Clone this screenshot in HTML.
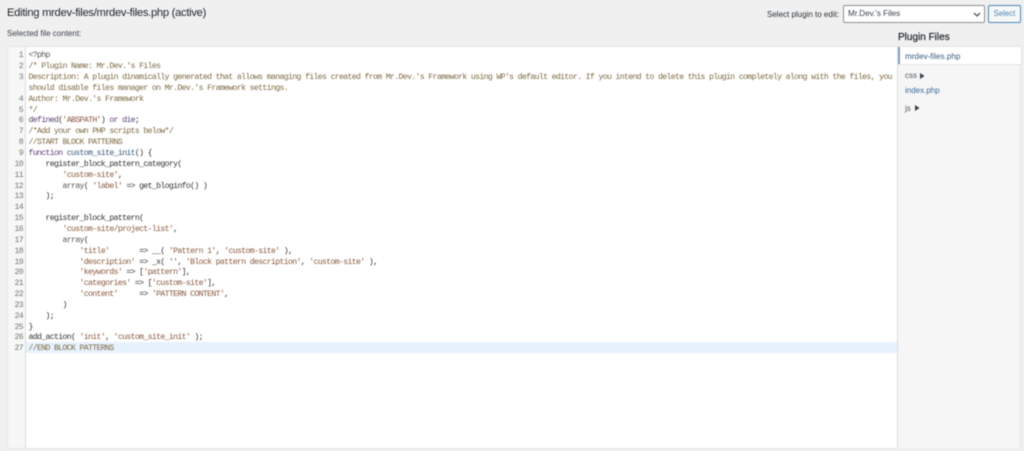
<!DOCTYPE html>
<html>
<head>
<meta charset="utf-8">
<style>
html,body{margin:0;padding:0;width:1024px;height:451px;overflow:hidden;background:#f0f0f1;}
#w{position:relative;width:1024px;height:451px;overflow:hidden;filter:blur(0.4px);font-family:"Liberation Sans",sans-serif;color:#3c434a;}
.a{position:absolute;white-space:nowrap;}
#ed{position:absolute;left:8px;top:47px;width:889px;height:401px;background:#fff;box-shadow:0 0 0 1px #e6e6e8;}
#gut{position:absolute;left:8px;top:47px;width:17px;height:401px;background:#f6f7f7;border-right:1px solid #dcdcde;}
#hl{position:absolute;left:26px;top:342px;width:871px;height:11px;background:#e8f2fe;}
.l{position:absolute;left:28.5px;margin-top:1px;white-space:pre;font-family:"Liberation Mono",monospace;font-size:8.2px;letter-spacing:-0.66px;line-height:11px;height:11px;color:#333;}
.n{position:absolute;left:8px;width:15px;margin-top:1px;text-align:right;font-family:"Liberation Mono",monospace;font-size:8.2px;letter-spacing:-0.66px;line-height:11px;color:#777;}
.c{color:#7d6a44;}
.s{color:#8a5a40;}
.k{color:#5c3f78;}
.f{color:#3a5a78;}
.p{color:#555;}
#side{position:absolute;left:897px;top:47px;width:124px;height:401px;background:#f6f6f6;border-left:1px solid #dcdcde;border-right:1px solid #e4e4e4;box-sizing:border-box;}
</style>
</head>
<body>
<div id="w">
<div class="a" style="left:7px;top:5px;font-size:11.2px;letter-spacing:-0.28px;line-height:16px;color:#1d2327;">Editing mrdev-files/mrdev-files.php (active)</div>
<div class="a" style="left:7px;top:28px;font-size:8px;line-height:12px;color:#3c434a;">Selected file content:</div>

<div class="a" style="left:767px;top:9px;font-size:8px;line-height:12px;color:#2c3338;">Select plugin to edit:</div>
<div class="a" style="left:843px;top:5px;width:140px;height:16px;background:#fff;border:1px solid #8c8f94;border-radius:2px;"></div>
<div class="a" style="left:848px;top:8px;font-size:8.1px;line-height:12px;color:#3c434a;">Mr.Dev.'s Files</div>
<svg class="a" style="left:973px;top:12px;" width="8" height="5" viewBox="0 0 8 5"><path d="M1 1l3 3 3-3" fill="none" stroke="#50575e" stroke-width="1.3"/></svg>
<div class="a" style="left:988px;top:5px;width:31px;height:16px;background:#f6f7f7;border:1px solid #4d86b5;border-radius:2px;text-align:center;font-size:7.8px;line-height:16px;color:#4d86b5;">Select</div>

<div id="ed"></div>
<div id="gut"></div>
<div id="hl"></div>

<div class="n" style="top:49px">1</div><div class="l" style="top:49px"><span class="p">&lt;?php</span></div>
<div class="n" style="top:60px">2</div><div class="l c" style="top:60px">/* Plugin Name: Mr.Dev.'s Files</div>
<div class="n" style="top:71px">3</div><div class="l c" style="top:71px">Description: A plugin dinamically generated that allows managing files created from Mr.Dev.'s Framework using WP's default editor. If you intend to delete this plugin completely along with the files, you</div>
<div class="l c" style="top:82px">should disable files manager on Mr.Dev.'s Framework settings.</div>
<div class="n" style="top:92.7px">4</div><div class="l c" style="top:92.7px">Author: Mr.Dev.'s Framework</div>
<div class="n" style="top:103.6px">5</div><div class="l c" style="top:103.6px">*/</div>
<div class="n" style="top:114.4px">6</div><div class="l" style="top:114.4px"><span class="k">defined</span>(<span class="s">'ABSPATH'</span>) <span class="k">or die</span>;</div>
<div class="n" style="top:125.3px">7</div><div class="l c" style="top:125.3px">/*Add your own PHP scripts below*/</div>
<div class="n" style="top:136.1px">8</div><div class="l c" style="top:136.1px">//START BLOCK PATTERNS</div>
<div class="n" style="top:147px">9</div><div class="l" style="top:147px"><span class="k">function</span> <span class="f">custom_site_init</span>() {</div>
<div class="n" style="top:157.8px">10</div><div class="l" style="top:157.8px">    register_block_pattern_category(</div>
<div class="n" style="top:168.7px">11</div><div class="l" style="top:168.7px">        <span class="s">'custom-site'</span>,</div>
<div class="n" style="top:179.5px">12</div><div class="l" style="top:179.5px">        <span class="p">array</span>( <span class="s">'label'</span> =&gt; get_bloginfo() )</div>
<div class="n" style="top:190.4px">13</div><div class="l" style="top:190.4px">    );</div>
<div class="n" style="top:201.2px">14</div>
<div class="n" style="top:212.1px">15</div><div class="l" style="top:212.1px">    register_block_pattern(</div>
<div class="n" style="top:222.9px">16</div><div class="l" style="top:222.9px">        <span class="s">'custom-site/project-list'</span>,</div>
<div class="n" style="top:233.8px">17</div><div class="l" style="top:233.8px">        <span class="p">array</span>(</div>
<div class="n" style="top:244.6px">18</div><div class="l" style="top:244.6px">            <span class="s">'title'</span>       =&gt; __( <span class="s">'Pattern 1'</span>, <span class="s">'custom-site'</span> ),</div>
<div class="n" style="top:255.5px">19</div><div class="l" style="top:255.5px">            <span class="s">'description'</span> =&gt; _x( <span class="s">''</span>, <span class="s">'Block pattern description'</span>, <span class="s">'custom-site'</span> ),</div>
<div class="n" style="top:266.3px">20</div><div class="l" style="top:266.3px">            <span class="s">'keywords'</span> =&gt; [<span class="s">'pattern'</span>],</div>
<div class="n" style="top:277.2px">21</div><div class="l" style="top:277.2px">            <span class="s">'categories'</span> =&gt; [<span class="s">'custom-site'</span>],</div>
<div class="n" style="top:288px">22</div><div class="l" style="top:288px">            <span class="s">'content'</span>     =&gt; <span class="s">'PATTERN CONTENT'</span>,</div>
<div class="n" style="top:298.9px">23</div><div class="l" style="top:298.9px">        )</div>
<div class="n" style="top:309.7px">24</div><div class="l" style="top:309.7px">    );</div>
<div class="n" style="top:320.6px">25</div><div class="l" style="top:320.6px">}</div>
<div class="n" style="top:331.4px">26</div><div class="l" style="top:331.4px">add_action( <span class="s">'init'</span>, <span class="s">'custom_site_init'</span> );</div>
<div class="n" style="top:342.3px">27</div><div class="l c" style="top:342.3px">//END BLOCK PATTERNS</div>

<div class="a" style="left:898px;top:31px;font-size:10px;font-weight:400;line-height:14px;color:#1d2327;-webkit-text-stroke:0.2px #1d2327;">Plugin Files</div>
<div id="side"></div>
<div class="a" style="left:898px;top:47px;width:123px;height:17px;background:#fff;border-left:2px solid #7e9fc4;box-sizing:border-box;box-shadow:0 0 0 1px #e4e4e4;"></div>
<div class="a" style="left:905px;top:51px;font-size:8.1px;line-height:12px;color:#3a5a82;">mrdev-files.php</div>
<div class="a" style="left:905px;top:70px;font-size:8px;line-height:12px;color:#50575e;">css</div>
<svg class="a" style="left:920px;top:73px;" width="5" height="6"><path d="M0 0l4.5 3-4.5 3z" fill="#3c434a"/></svg>
<div class="a" style="left:905px;top:85px;font-size:8px;line-height:12px;color:#3a6a9a;">index.php</div>
<div class="a" style="left:905px;top:103px;font-size:8px;line-height:12px;color:#50575e;">js</div>
<svg class="a" style="left:915px;top:105px;" width="5" height="6"><path d="M0 0l4.5 3-4.5 3z" fill="#3c434a"/></svg>
</div>
</body>
</html>
